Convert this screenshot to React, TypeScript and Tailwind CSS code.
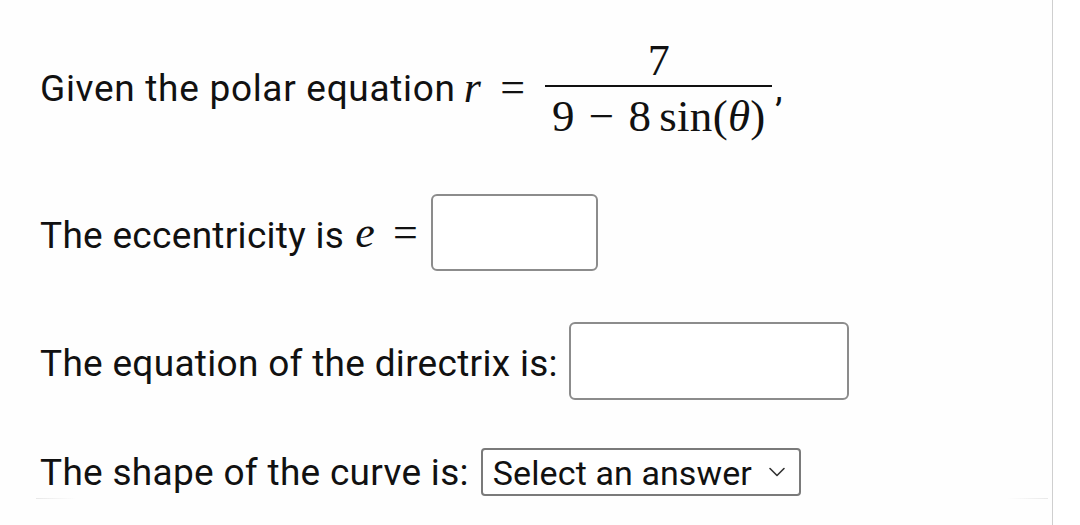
import { ChevronDown } from "lucide-react";

const serif = "font-['Liberation_Serif','DejaVu_Serif',serif]";

function Fraction() {
  return (
    <div className="ml-[20px] mt-[6px] inline-flex flex-col items-stretch">
      <div className={`${serif} text-center text-[44px] leading-[44px] h-[46px]`}>7</div>
      <div className="h-[2px] bg-[#111] w-[227px]" />
      <div className={`${serif} text-center text-[45px] leading-[48px] h-[56px] pt-[5px] whitespace-nowrap`}>
        9<span className="mx-[14px]">−</span>8<span className="ml-[8px]">sin(</span>
        <i>θ</i>)
      </div>
    </div>
  );
}

function Box({ w, h }: { w: string; h: string }) {
  return <div className={`${w} ${h} shrink-0 rounded-[6px] border-2 border-[#8c8c8c] bg-white`} />;
}

export default function App() {
  return (
    <div className="w-full h-[525px] bg-white flex">
      <div className="w-[1053px] h-full bg-[#fefefe] border-r border-[#cfcfcf] flex flex-col pl-[40px] font-['Roboto','Liberation_Sans',sans-serif] text-[#111] text-[37px] leading-[42px] tracking-[0.3px] whitespace-nowrap">
        <div className="mt-[30px] h-[116px] flex items-center">
          <span className="pt-[2px] tracking-[0.7px]">Given the polar equation</span>
          <i className={`${serif} text-[44px] ml-[8px]`}>r</i>
          <span className={`${serif} text-[44px] ml-[19px]`}>=</span>
          <Fraction />
          <span className="ml-[3px] pt-[2px]">,</span>
        </div>
        <div className="mt-[48px] h-[77px] flex items-center">
          <span className="pt-[6px]">The eccentricity is</span>
          <i className={`${serif} text-[44px] ml-[11px]`}>e</i>
          <span className={`${serif} text-[44px] ml-[18px] mr-[13px]`}>=</span>
          <Box w="w-[167px]" h="h-[77px]" />
        </div>
        <div className="mt-[51px] h-[78px] flex items-center">
          <span className="pt-[6px] mr-[11px]">The equation of the directrix is:</span>
          <Box w="w-[280px]" h="h-[78px]" />
        </div>
        <div className="mt-[48px] h-[48px] flex items-center">
          <span className="pt-[2px] mr-[12px]">The shape of the curve is:</span>
          <div className="h-[48px] w-[320px] shrink-0 rounded-[4px] border-2 border-[#7a7a7a] bg-white flex items-center pl-[10px] pr-[8px]">
            <span className="pt-[2px] flex-1 text-[34px] tracking-[0.1px]">Select an answer</span>
            <ChevronDown size={28} strokeWidth={1.4} className="shrink-0 text-[#333]" />
          </div>
        </div>
        <div className="mt-[2px] -ml-[4px] w-[1012px] h-[1px] bg-[linear-gradient(to_right,#e8e8e8,transparent_4%,transparent_96%,#e8e8e8)]" />
      </div>
    </div>
  );
}
